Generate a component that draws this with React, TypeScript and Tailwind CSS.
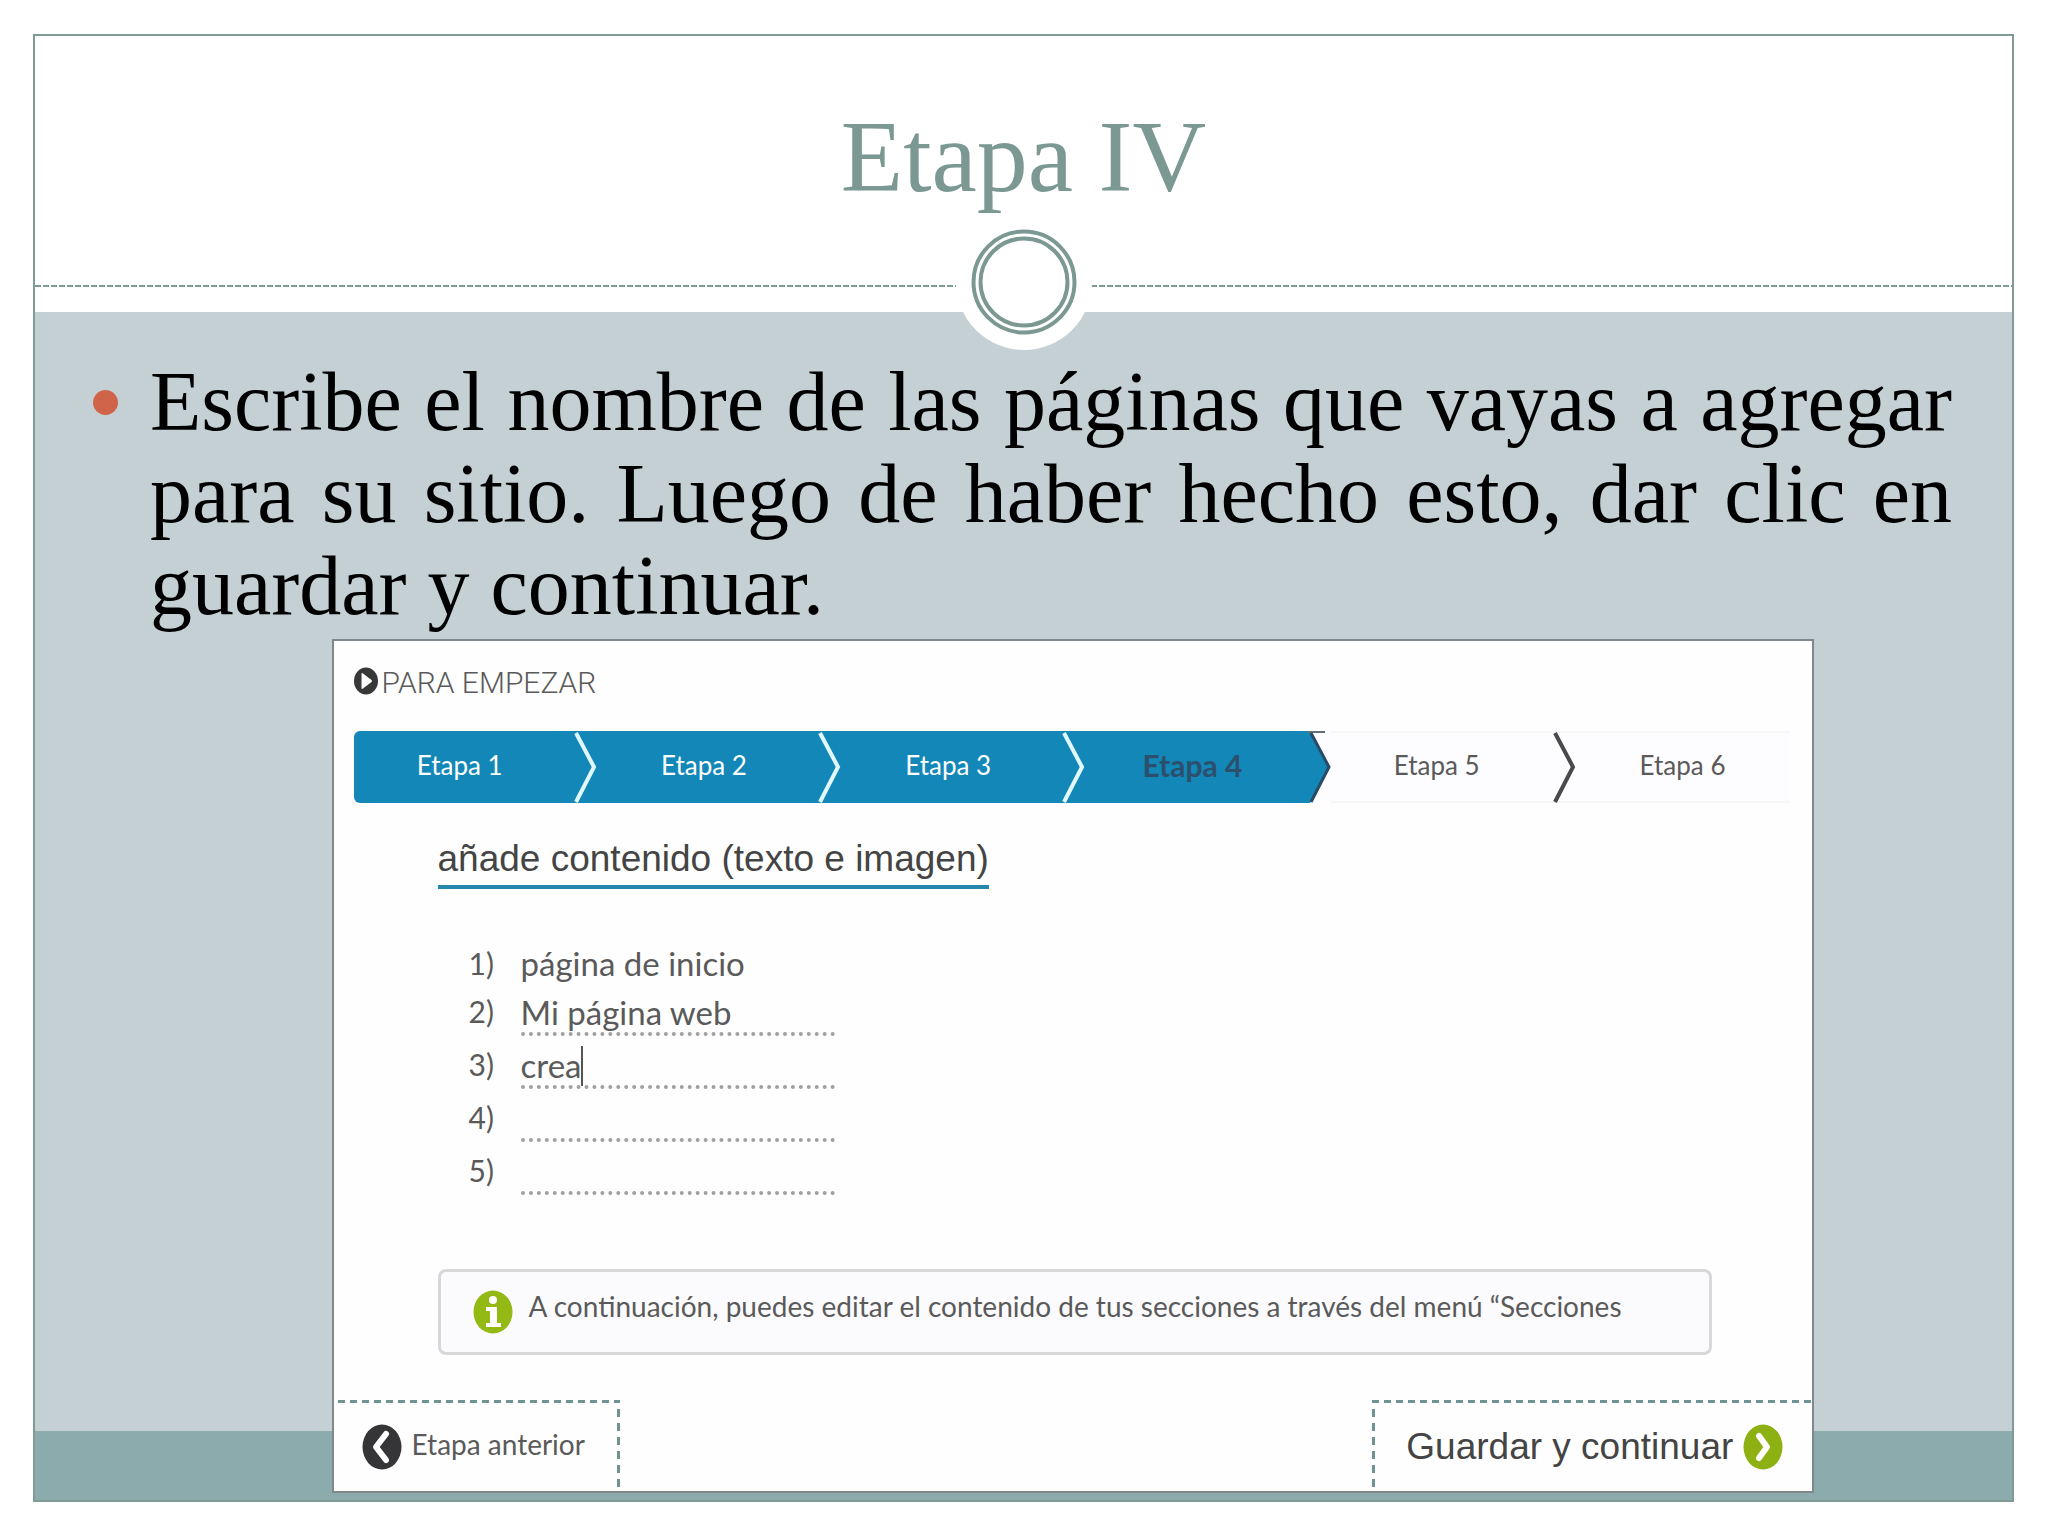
import { useState } from 'react'

type StepState = 'done' | 'current' | 'pending'

const steps: { label: string; state: StepState }[] = [
  { label: 'Etapa 1', state: 'done' },
  { label: 'Etapa 2', state: 'done' },
  { label: 'Etapa 3', state: 'done' },
  { label: 'Etapa 4', state: 'current' },
  { label: 'Etapa 5', state: 'pending' },
  { label: 'Etapa 6', state: 'pending' },
]

const stepStyles: Record<StepState, string> = {
  done: 'bg-[#1287b8] text-white',
  current: 'bg-[#1287b8] text-[#2c4f6c] font-bold text-[30px]',
  pending: 'bg-[#fdfcfe] text-[#5a5a5a] shadow-[inset_0_2px_#f8f6f9,inset_0_-2px_#f8f6f9]',
}

function StepArrow({ state }: { state: StepState }) {
  return (
    <svg viewBox="0 0 32 72" preserveAspectRatio="none" className="w-8 h-full flex-shrink-0" fill="none">
      {state === 'current' && <path d="M11 0 L30 36 L11 72 H32 V0 Z" fill="#fdfcfe" />}
      {state === 'current' && <path d="M8 1 H26" stroke="#5f7078" strokeWidth="2" />}
      <path
        d={state === 'done' ? 'M10 2 L28 36 L10 71' : 'M12 2 L30 36 L12 71'}
        stroke={state === 'done' ? '#e2f8ff' : state === 'current' ? '#2a4a66' : '#4a4a4a'}
        strokeWidth={state === 'current' ? 3 : 4}
      />
    </svg>
  )
}

function PlayIcon() {
  return (
    <svg viewBox="0 0 24 28" className="w-6 h-7 flex-shrink-0">
      <ellipse cx="12" cy="14" rx="12" ry="13.5" fill="#383838" />
      <path d="M7.5 7 Q7.5 5.5 9 6.5 L17.5 13 Q18.5 14 17.5 15 L9 21.5 Q7.5 22.5 7.5 21 Z" fill="#fff" />
    </svg>
  )
}

function InfoIcon() {
  return (
    <svg viewBox="0 0 40 44" className="w-10 h-11 flex-shrink-0">
      <ellipse cx="20" cy="22" rx="19.5" ry="21.5" fill="#93b914" />
      <ellipse cx="20" cy="10" rx="4" ry="4" fill="#fff" />
      <path d="M13 17 H24 V33 H28 V37 H13 V33 H17 V21 H13 Z" fill="#fff" />
    </svg>
  )
}

function ChevronIcon({ side }: { side: 'left' | 'right' }) {
  return (
    <svg viewBox="0 0 40 46" className="w-10 h-[46px] flex-shrink-0" fill="none">
      <ellipse cx="20" cy="23" rx="19.5" ry="22.5" fill={side === 'left' ? '#353537' : '#8db012'} />
      <path
        d={side === 'left' ? 'M24 10 L14 23 L24 36' : 'M16 12 L24 23 L16 34'}
        stroke="#fff"
        strokeWidth="6"
        strokeLinecap="round"
        strokeLinejoin="round"
      />
    </svg>
  )
}

export default function App() {
  const [pages, setPages] = useState(['Mi página web', 'crea', '', ''])

  function updatePage(index: number, value: string) {
    setPages(prev => prev.map((p, i) => (i === index ? value : p)))
  }

  return (
    <div className="min-h-screen bg-white py-[34px] pl-[33px] pr-[34px] font-['Liberation_Serif',serif]">
      <div className="border-2 border-[#7f9b96]">
        {/* Header */}
        <header className="relative bg-white pt-[71px] pb-[25px]">
          <h1 className="text-center text-[102px] leading-[100px] text-[#7b9893]">Etapa IV</h1>
          <div className="mt-[78px] h-[2px] bg-[repeating-linear-gradient(to_right,#7f9b96_0_6px,transparent_6px_8px)]" />
          <svg viewBox="0 0 136 136" className="absolute left-1/2 -bottom-[38px] w-[136px] h-[136px] -translate-x-1/2" fill="none">
            <circle cx="68" cy="68" r="68" fill="#fff" />
            <circle cx="68" cy="68" r="50.5" stroke="#7b9893" strokeWidth="4" />
            <circle cx="68" cy="68" r="43.5" stroke="#7b9893" strokeWidth="4" />
          </svg>
        </header>

        <main className="bg-[linear-gradient(to_top,#8cabad_69px,#c5d0d4_69px)] pt-11 pb-[7px]">
          <ul className="pl-[58px] pr-[60px]">
            <li className="flex items-start gap-8">
              <span className="mt-[34px] w-[25px] h-[25px] rounded-full bg-[#d0644a] flex-shrink-0" />
              <p className="flex-1 text-justify text-[84px] leading-[92px] text-black">
                Escribe el nombre de las páginas que vayas a agregar para su sitio. Luego de haber hecho
                esto, dar clic en guardar y continuar.
              </p>
            </li>
          </ul>

          {/* Wizard */}
          <form
            onSubmit={e => e.preventDefault()}
            className="mt-[7px] ml-[15%] mr-[10%] border-2 border-[#80888b] bg-[#fefefe] font-[Lato,sans-serif] text-[26px] text-[#5a5a5a]"
          >
            <div className="flex items-center pt-[22px] pl-5 text-[30px] leading-8">
              <PlayIcon />
              <h2 className="pl-1 pt-1 font-[Roboto,sans-serif] font-light">PARA EMPEZAR</h2>
            </div>

            <nav className="mt-8 ml-5 mr-[22px]">
              <ol className="grid grid-cols-[repeat(5,17%)_1fr] h-[72px] rounded-l-md overflow-hidden">
                {steps.map((step, i) => (
                  <li key={step.label} className={`flex items-center ${stepStyles[step.state]}`}>
                    <a href="#" className="flex-1 pb-1 text-center">{step.label}</a>
                    {i < steps.length - 1 && <StepArrow state={step.state} />}
                  </li>
                ))}
              </ol>
            </nav>

            <div className="pl-[104px] pr-[100px]">
              <h3 className="inline-block mt-9 pb-[6px] border-b-4 border-[#2487ab] font-['Liberation_Sans',sans-serif] text-[37px] leading-10 text-[#444]">
                añade contenido (texto e imagen)
              </h3>

              <ol className="mt-[41px] pl-[31px] text-[33px]">
                <li className="flex items-center h-[53px] pt-[14px]">
                  <span className="w-[52px] text-[30px]">1)</span>
                  <span>página de inicio</span>
                </li>
                {pages.map((page, i) => (
                  <li key={i} className="flex items-center h-[53px]">
                    <label htmlFor={`page-${i}`} className="w-[52px] pt-1 text-[30px]">{i + 2})</label>
                    <div className="flex items-center w-[314px] h-full pt-[10px] border-b-4 border-dotted border-[#a0a0a0]">
                      <input
                        id={`page-${i}`}
                        type="text"
                        value={page}
                        onChange={e => updatePage(i, e.target.value)}
                        className="field-sizing-content min-w-4 h-10 outline-none"
                      />
                      {i === 1 && <span className="w-[2px] h-10 bg-[#555]" />}
                    </div>
                  </li>
                ))}
              </ol>

              <div className="flex items-center gap-4 mt-[74px] h-[86px] pl-8 rounded-lg border-3 border-[#d8d8da] bg-[#fbfafd]">
                <InfoIcon />
                <p className="pb-3 text-[28px] whitespace-nowrap">
                  A continuación, puedes editar el contenido de tus secciones a través del menú “Secciones
                </p>
              </div>
            </div>

            {/* Footer actions */}
            <div className="flex justify-between mt-[45px] h-[91px]">
              <div className="flex flex-col w-[286px]">
                <div className="ml-1 h-[3px] bg-[repeating-linear-gradient(to_right,#6f9393_0_7px,transparent_7px_12px)]" />
                <div className="flex flex-1">
                  <button type="button" className="flex flex-1 items-center gap-[10px] pl-7 text-[28px]">
                    <ChevronIcon side="left" />
                    <span className="pb-[6px]">Etapa anterior</span>
                  </button>
                  <div className="w-[3px] bg-[repeating-linear-gradient(to_bottom,transparent_0_6px,#6f9393_6px_14px)]" />
                </div>
              </div>
              <div className="flex flex-col w-[440px]">
                <div className="h-[3px] bg-[repeating-linear-gradient(to_right,#6f9393_0_7px,transparent_7px_12px)]" />
                <div className="flex flex-1">
                  <div className="w-[3px] bg-[repeating-linear-gradient(to_bottom,transparent_0_6px,#6f9393_6px_14px)]" />
                  <button
                    type="submit"
                    className="flex flex-1 items-center justify-end gap-[10px] pr-[29px] font-['Liberation_Sans',sans-serif] text-[37px] text-[#444]"
                  >
                    Guardar y continuar
                    <ChevronIcon side="right" />
                  </button>
                </div>
              </div>
            </div>
          </form>
        </main>
      </div>
    </div>
  )
}
